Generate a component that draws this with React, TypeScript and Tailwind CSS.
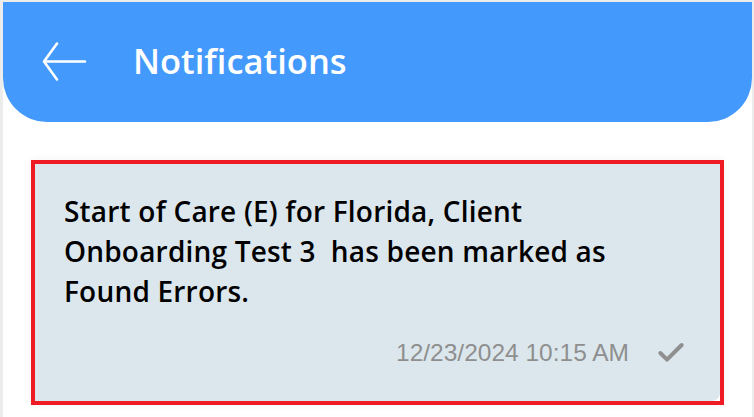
import { Check } from "lucide-react";

function BackArrow() {
  return (
    <svg width="46" height="40" viewBox="0 0 46 40" fill="none" className="shrink-0">
      <path
        d="M44 19.5H3M3 19.5L16 1.5M3 19.5L16 37.5"
        stroke="white"
        strokeWidth="2.6"
        strokeLinecap="round"
        strokeLinejoin="round"
      />
    </svg>
  );
}

export default function App() {
  return (
    <div className="w-[754px] h-[417px] overflow-hidden bg-white border-t-2 border-l-[3px] border-r-2 border-[#ececec] font-['Open_Sans',sans-serif]">
      {/* Header */}
      <div className="h-[120px] bg-[#4499fd] rounded-b-[44px] flex items-center pl-[38px] gap-[46px]">
        <BackArrow />
        <h1 className="text-white text-[34.5px] font-semibold leading-none -mt-[2px]">
          Notifications
        </h1>
      </div>

      {/* Notification card */}
      <div className="mx-[28px] mt-[38px] h-[245px] border-4 border-[#ee1b24] shadow-[0_0_8px_rgba(0,0,0,0.06)]">
        <div className="h-full bg-[#dce7ed] rounded-br-lg pl-[29px] pr-[33px] pt-[27px] flex flex-col">
          <p className="text-black text-[28px] font-semibold tracking-[0.2px] leading-[40px] whitespace-pre">
            {"Start of Care (E) for Florida, Client\nOnboarding Test 3  has been marked as\nFound Errors."}
          </p>
          <div className="mt-[26px] flex items-center justify-end gap-[26px]">
            <span className="text-[#8f8f8f] text-[24.5px] leading-[28px] font-['Liberation_Sans',sans-serif]">
              12/23/2024 10:15 AM
            </span>
            <Check className="w-[32px] h-[32px] text-[#8f8f8f]" strokeWidth={3} />
          </div>
        </div>
      </div>
    </div>
  );
}
